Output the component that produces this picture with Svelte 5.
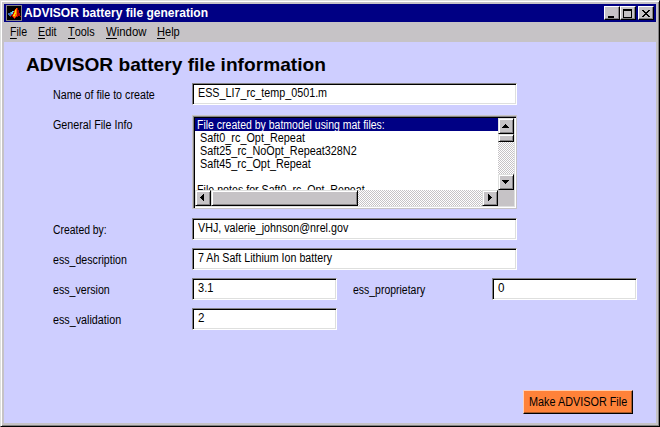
<script>
  const menus = [
    { key: 'F', rest: 'ile', w: 17, gap: 11 },
    { key: 'E', rest: 'dit', w: 19, gap: 11 },
    { key: 'T', rest: 'ools', w: 27, gap: 11 },
    { key: 'W', rest: 'indow', w: 40, gap: 11 },
    { key: 'H', rest: 'elp', w: 23, gap: 0 }
  ];
  const files = [
    { text: 'File created by batmodel using mat files:', w: 188, indent: 2 },
    { text: 'Saft0_rc_Opt_Repeat', w: 105, indent: 5 },
    { text: 'Saft25_rc_NoOpt_Repeat328N2', w: 157, indent: 5 },
    { text: 'Saft45_rc_Opt_Repeat', w: 111, indent: 5 },
    { text: '', w: 0, indent: 0 },
    { text: 'File notes for Saft0_rc_Opt_Repeat', w: 168, indent: 2 }
  ];

  // Condenses a label horizontally to its bitmap-font width.
  function fit(node, width) {
    const natural = node.offsetWidth;
    if (natural && width) {
      node.style.transform = `scaleX(${width / natural})`;
      node.style.marginRight = `${width - natural}px`;
    }
  }
</script>

{#snippet label(text, w)}
  <div class="label"><span class="t" use:fit={w}>{text}</span></div>
{/snippet}

{#snippet field(text, w, short)}
  <div class="field" class:short><span class="t" use:fit={w}>{text}</span></div>
{/snippet}

{#snippet arrow(points)}
  <svg width="16" height="16" viewBox="0 0 16 16" shape-rendering="crispEdges"><path d={points} /></svg>
{/snippet}

<div class="window">
  <header>
    <svg class="logo" width="16" height="16" viewBox="0 0 16 16" shape-rendering="crispEdges">
      <path fill="#848284" d="M0 0h16v16H0z" />
      <path fill="#000" d="M1 1h14v14H1z" />
      <path fill="#3969b5" d="M1 9l4-2 2 2-3 3z" />
      <path fill="#63cfde" d="M4 8l3-2 1 1-2 2z" />
      <path fill="#b50000" d="M4 12l3-4 3-5h2l3 9-2-1-2 1-3 2-2-3z" />
      <path fill="#ff6500" d="M7 10l3-7h1v7l-3 4z" />
      <path fill="#ffdf00" d="M9 7l1-3v4l-2 4-1-1z" />
    </svg>
    <span class="t title" use:fit={184}>ADVISOR battery file generation</span>
    <div class="controls">
      <button aria-label="Minimize">
        <svg width="15" height="13" shape-rendering="crispEdges"><path d="M4 9h6v2H4z" /></svg>
      </button>
      <button aria-label="Maximize">
        <svg width="15" height="13" shape-rendering="crispEdges"><path fill-rule="evenodd" d="M3 2h9v9H3zM4 4v6h7V4z" /></svg>
      </button>
      <button class="close" aria-label="Close">
        <svg width="15" height="13" shape-rendering="crispEdges"><path d="M4 3h2v1h1v1h2V4h1V3h2v1h-1v1h-1v1H9v1h1v1h1v1h1v1h-2V9H9V8H7v1H6v1H4V9h1V8h1V7h1V6H6V5H5V4H4z" /></svg>
      </button>
    </div>
  </header>
  <nav>
    {#each menus as m}
      <div class="menu" style:width="{m.w + m.gap}px">
        <span class="t" use:fit={m.w}><span class="key">{m.key}</span>{m.rest}</span>
      </div>
    {/each}
  </nav>
  <main>
    <h1><span class="t" use:fit={300}>ADVISOR battery file information</span></h1>
    <div class="row">{@render label('Name of file to create', 102)}{@render field('ESS_LI7_rc_temp_0501.m', 129)}</div>
    <div class="row tall">
      {@render label('General File Info', 79)}
      <div class="list">
        <div class="items">
          {#each files as f, i}
            <div class="item" class:selected={i === 0} style:padding-left="{f.indent}px"><span class="t" use:fit={f.w}>{f.text}</span></div>
          {/each}
        </div>
        <div class="vbar">
          <div class="sb">{@render arrow('M7 6h1v1h1v1h1v1h1v1H4V9h1V8h1V7h1z')}</div>
          <div class="thumb"></div>
          <div class="track"></div>
          <div class="sb">{@render arrow('M4 6h7v1h-1v1H9v1H8v1H7V9H6V8H5V7H4z')}</div>
        </div>
        <div class="hbar">
          <div class="sb">{@render arrow('M8 4h1v7H8v-1H7V9H6V8H5V7h1V6h1V5h1z')}</div>
          <div class="thumb"></div>
          <div class="track"></div>
          <div class="sb">{@render arrow('M6 4h1v1h1v1h1v1h1v1H9v1H8v1H7v1H6z')}</div>
        </div>
        <div class="corner"></div>
      </div>
    </div>
    <div class="row">{@render label('Created by:', 54)}{@render field('VHJ, valerie_johnson@nrel.gov', 150)}</div>
    <div class="row">{@render label('ess_description', 74)}{@render field('7 Ah Saft Lithium Ion battery', 134)}</div>
    <div class="row">
      {@render label('ess_version', 57)}{@render field('3.1', 15, true)}
      <div class="second">{@render label('ess_proprietary', 72)}</div>
      {@render field('0', 6.5, true)}
    </div>
    <div class="row">{@render label('ess_validation', 68)}{@render field('2', 6.5, true)}</div>
    <button class="make"><span class="t" use:fit={98}>Make ADVISOR File</span></button>
  </main>
</div>

<style>
  :global(body) { margin: 0; overflow: hidden; }
  .window, .window * { box-sizing: border-box; }
  .window {
    width: 660px; height: 427px; padding: 3px;
    display: flex; flex-direction: column;
    background: #c6c3c6; color: #000;
    border: 1px solid; border-color: #dedfde #000 #000 #dedfde;
    box-shadow: inset 1px 1px #fff, inset -1px -1px #848284;
    font: 12.5px/15px "Liberation Sans", Arial, sans-serif;
  }
  svg { display: block; flex: none; }
  .t { display: inline-block; flex: none; white-space: pre; transform-origin: 0 50%; }
  header { height: 18px; flex: none; display: flex; align-items: center; background: #000084; color: #fff; padding: 0 2px; }
  .title { font-weight: bold; margin-left: 2px; }
  .controls { margin-left: auto; display: flex; }
  button { font: inherit; color: #000; margin: 0; padding: 0; border-radius: 0; }
  .controls button {
    width: 16px; height: 14px; background: #c6c3c6; border: 1px solid;
    border-color: #fff #000 #000 #fff; box-shadow: inset -1px -1px #848284; overflow: hidden;
  }
  .controls svg { margin: -1px; }
  .controls .close { margin-left: 2px; }
  nav { height: 20px; flex: none; display: flex; padding: 3px 0 0 6px; }
  .menu { flex: none; white-space: nowrap; }
  .key { display: inline-block; height: 14px; border-bottom: 1px solid #000; }
  main { flex: 1; min-height: 0; display: flex; flex-direction: column; background: #ceceff; }
  h1 { margin: 0; height: 41px; padding: 12px 0 0 22px; font-size: 18.5px; line-height: 22px; }
  .row { display: flex; height: 30px; flex: none; padding-left: 49px; }
  .tall { height: 105px; }
  .row.tall .list { margin-top: 2px; }
  .label { width: 139px; padding-top: 5px; flex: none; }
  .second { width: 155px; padding-left: 16px; }
  .field {
    width: 325px; height: 22px; flex: none; padding: 2px 5px; background: #fff;
    border: 1px solid; border-color: #848284 #fff #fff #848284;
    box-shadow: inset 1px 1px #000, inset -1px -1px #dedfde;
  }
  .short { width: 145px; }
  .list {
    width: 325px; height: 94px; flex: none; padding: 2px; background: #fff;
    border: 1px solid #c6c3c6;
    box-shadow: inset 1px 1px #848284, inset 2px 2px #000, inset -1px -1px #fff, inset -2px -2px #dedfde;
    display: grid; grid-template-columns: 303px 16px; grid-template-rows: 72px 16px;
  }
  .items { overflow: hidden; }
  .item { height: 13px; line-height: 14px; white-space: nowrap; }
  .selected { background: #000084; color: #fff; }
  .vbar, .hbar { display: flex; }
  .vbar { flex-direction: column; }
  .sb, .thumb {
    flex: none; background: #c6c3c6; border: 1px solid; border-color: #dedfde #000 #000 #dedfde;
    box-shadow: inset 1px 1px #fff, inset -1px -1px #848284;
  }
  .sb { width: 16px; height: 16px; }
  .sb svg { margin: -1px; }
  .vbar .thumb { height: 8px; }
  .hbar .thumb { width: 147px; }
  .track { flex: 1; background: repeating-conic-gradient(#fff 0 25%, #c6c3c6 0 50%) 0 0 / 2px 2px; }
  .corner { background: #c6c3c6; }
  .make {
    width: 110px; height: 24px; margin: auto 0 9px 519px; background: #ff8239; text-align: left;
    border: 1px solid; border-color: #ffcfb5 #000 #000 #ffcfb5; padding: 0 0 0 5px;
    box-shadow: inset -1px -1px #a55929; line-height: 15px;
  }
</style>
